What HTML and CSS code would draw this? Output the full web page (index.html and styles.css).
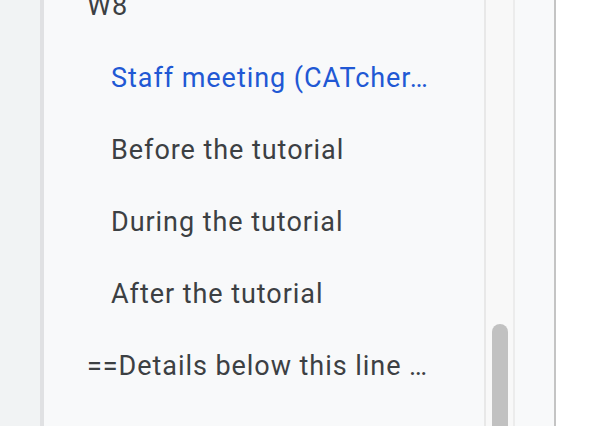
FILE: index.html
```html
<!DOCTYPE html>
<html>
<head>
<meta charset="utf-8">
<link rel="stylesheet" href="styles.css">
</head>
<body>
<div class="gutter"></div>
<div class="outline">
  <ul class="list">
    <li class="item lvl1">W8</li>
    <li class="item lvl2 active"><span class="bar"></span>Staff meeting (CATcher…</li>
    <li class="item lvl2">Before the tutorial</li>
    <li class="item lvl2">During the tutorial</li>
    <li class="item lvl2">After the tutorial</li>
    <li class="item lvl1">==Details below this line …</li>
  </ul>
</div>
<div class="scrollbar"><div class="thumb"></div></div>
<div class="side"></div>
<div class="page"></div>
</body>
</html>
```
FILE: styles.css
```css
html, body {
  margin: 0;
  padding: 0;
  height: 426px;
  overflow: hidden;
}
body {
  display: flex;
  background: #ffffff;
  font-family: Roboto, "Noto Sans", sans-serif;
}
.gutter {
  width: 40px;
  flex: none;
  background: #f1f3f4;
}
.outline {
  width: 440px;
  flex: none;
  border-left: 4px solid #e0e1e3;
  background: #f8f9fa;
  overflow: hidden;
}
.list {
  list-style: none;
  margin: -30px 0 0 0;
  padding: 0;
}
.item {
  position: relative;
  height: 72px;
  line-height: 72px;
  font-size: 27px;
  letter-spacing: 0.95px;
  color: #3c4043;
  white-space: nowrap;
}
.lvl1 { padding-left: 43px; }
.lvl2 { padding-left: 67px; }
.active { color: #2158d4; }
.bar {
  position: absolute;
  left: -4px;
  top: 19px;
  width: 4px;
  height: 32px;
  background: #2158d4;
}
.scrollbar {
  width: 27px;
  flex: none;
  border-left: 2px solid #e8e8e8;
  border-right: 2px solid #ececec;
  background: #f8f8f8;
  padding-top: 324px;
  box-sizing: content-box;
  overflow: hidden;
}
.thumb {
  width: 16px;
  height: 200px;
  margin-left: 6px;
  border-radius: 8px;
  background: #c1c1c1;
}
.side {
  width: 39px;
  flex: none;
  background: #f8f9fa;
  border-right: 2px solid #c4c4c4;
}
.page {
  flex: 1;
  background: #ffffff;
}
```
